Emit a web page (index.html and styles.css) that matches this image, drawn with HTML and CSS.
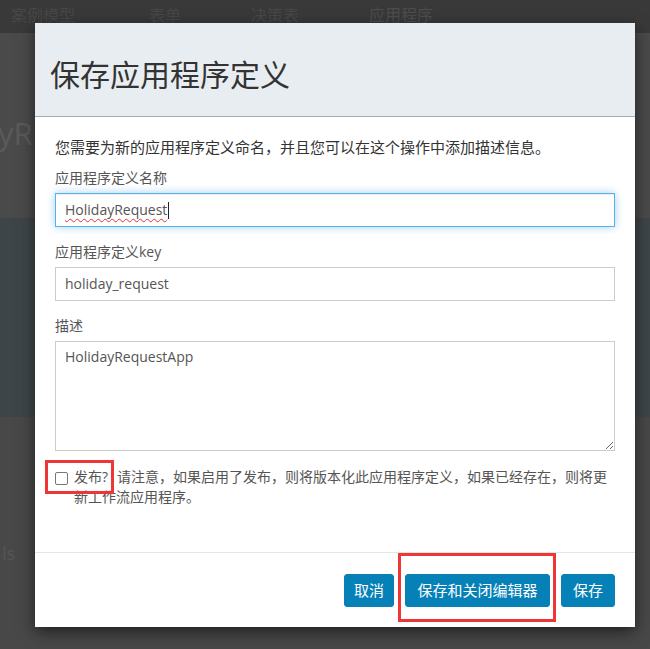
FILE: index.html
```html
<!DOCTYPE html>
<html lang="zh-CN">
<head>
<meta charset="utf-8">
<title>保存应用程序定义</title>
<link rel="stylesheet" href="styles.css">
</head>
<body>
<div class="page">
  <nav class="topnav">
    <span class="nav-item n1">案例模型</span>
    <span class="nav-item n2">表单</span>
    <span class="nav-item n3">决策表</span>
    <span class="nav-item n4 active">应用程序</span>
  </nav>
  <div class="hero"><span class="ghost-title">yR</span></div>
  <div class="band"></div>
  <div class="lower"><span class="ghost-ls">ls</span></div>
</div>

<div class="modal">
  <div class="modal-header">
    <h2 class="modal-title">保存应用程序定义</h2>
  </div>
  <div class="modal-body">
    <p class="intro">您需要为新的应用程序定义命名，并且您可以在这个操作中添加描述信息。</p>
    <div class="form-group">
      <label class="field-label">应用程序定义名称</label>
      <div class="input focused"><span class="squiggle">HolidayRequest</span><span class="caret"></span></div>
    </div>
    <div class="form-group">
      <label class="field-label">应用程序定义key</label>
      <div class="input">holiday_request</div>
    </div>
    <div class="form-group">
      <label class="field-label">描述</label>
      <textarea class="textarea" spellcheck="false">HolidayRequestApp</textarea>
    </div>
    <label class="check-row">
      <span class="mark mark-check"></span>
      <input type="checkbox" class="check">
      <span class="check-text"><span class="pub">发布?</span>请注意，如果启用了发布，则将版本化此应用程序定义，如果已经存在，则将更新工作流应用程序。</span>
    </label>
  </div>
  <div class="modal-footer">
    <button class="btn btn-cancel">取消</button>
    <span class="btn-wrap"><button class="btn btn-main">保存和关闭编辑器</button><span class="mark mark-btn"></span></span>
    <button class="btn btn-save">保存</button>
  </div>
</div>
</body>
</html>
```

FILE: styles.css
```css
* { box-sizing: border-box; }
html, body { margin: 0; padding: 0; }
body {
  width: 650px;
  height: 649px;
  overflow: hidden;
  background: #484848;
  font-family: "Open Sans", "Noto Sans CJK SC", sans-serif;
  position: relative;
}

.page { display: flex; flex-direction: column; height: 649px; }

.topnav {
  height: 33px;
  background: #393939;
  display: flex;
  align-items: center;
  font-size: 16px;
  color: #474747;
  padding-bottom: 5px;
}
.nav-item { flex: none; }
.n1 { margin-left: 11px; }
.n2 { margin-left: 74px; }
.n3 { margin-left: 70px; }
.n4 { margin-left: 70px; }
.nav-item.active { color: #4d4d4d; }

.hero {
  height: 185px;
  background: #4a4a4a;
  padding-top: 80px;
}
.ghost-title {
  display: block;
  font-size: 31px;
  line-height: 40px;
  color: #5a5a5a;
  margin-left: -2px;
}

.band { height: 199px; background: #3e4548; }

.lower { flex: 1; background: #484848; padding-top: 124px; }
.ghost-ls { display: block; font-size: 18px; color: #555; margin-left: 2px; }

.modal {
  position: absolute;
  left: 35px;
  top: 23px;
  width: 600px;
  background: #fff;
  box-shadow: 0 5px 15px rgba(0,0,0,.55);
}

.modal-header {
  height: 94px;
  background: #e8edf1;
  border-bottom: 1px solid #a3aeb8;
  padding: 34px 15px 0;
}
.modal-title {
  margin: 0;
  font-weight: normal;
  font-size: 30px;
  line-height: 36px;
  color: #333;
}

.modal-body {
  padding: 20px 20px 45px;
}
.intro {
  margin: 0 0 10px;
  font-size: 15px;
  line-height: 21px;
  color: #333;
}
.form-group { margin-bottom: 15px; }
.field-label {
  display: block;
  font-size: 14px;
  line-height: 20px;
  color: #555;
  margin-bottom: 5px;
}
.input {
  height: 34px;
  border: 1px solid #ccc;
  padding: 0 9px;
  font-size: 14px;
  line-height: 32px;
  color: #555;
  display: flex;
  align-items: center;
}
.input.focused {
  border-color: #55b3e9;
  box-shadow: inset 0 1px 1px rgba(0,0,0,.075), 0 0 8px rgba(102,175,233,.6);
}
.squiggle {
  text-decoration: underline wavy #e03434;
  text-decoration-thickness: 1px;
  text-underline-offset: 3px;
  text-decoration-skip-ink: none;
}
.caret {
  display: inline-block;
  width: 1px;
  height: 17px;
  background: #222;
  margin-left: 1px;
}
.textarea {
  display: block;
  width: 100%;
  height: 110px;
  border: 1px solid #ccc;
  border-radius: 0;
  padding: 5px 9px;
  font-family: "Open Sans", "Noto Sans CJK SC", sans-serif;
  font-size: 14px;
  line-height: 20px;
  color: #555;
  resize: vertical;
  outline: none;
  margin: 0;
}

.check-row {
  display: flex;
  align-items: flex-start;
  position: relative;
  margin-top: 16px;
  font-size: 14px;
  line-height: 20px;
  color: #555;
}
.check {
  -webkit-appearance: none;
  appearance: none;
  flex: none;
  width: 13px;
  height: 13px;
  margin: 5px 6px 0 0;
  border: 1px solid #767676;
  border-radius: 2px;
  background: #fff;
}
.check-text { flex: 1; }
.pub { margin-right: 9px; }

.mark {
  position: absolute;
  border: 3px solid #ee3636;
  pointer-events: none;
}
.mark-check { left: -10px; top: -7px; width: 69px; height: 34px; }

.modal-footer {
  border-top: 1px solid #e5e5e5;
  padding: 21px 20px 20px;
  display: flex;
  justify-content: flex-end;
  gap: 11px;
}
.btn {
  height: 33px;
  border: 1px solid #0a7fb3;
  border-radius: 3px;
  background: #0681b8;
  color: #fff;
  font-family: "Open Sans", "Noto Sans CJK SC", sans-serif;
  font-size: 15px;
  padding: 0 11px;
  margin: 0;
  line-height: 31px;
}
.btn-cancel { padding: 0 9px; }
.btn-main { padding: 0 11.5px; }
.btn-save { padding: 0 11px; }
.btn-wrap { position: relative; display: flex; }
.mark-btn { left: -7px; top: -21px; width: 158px; height: 69px; }
```
